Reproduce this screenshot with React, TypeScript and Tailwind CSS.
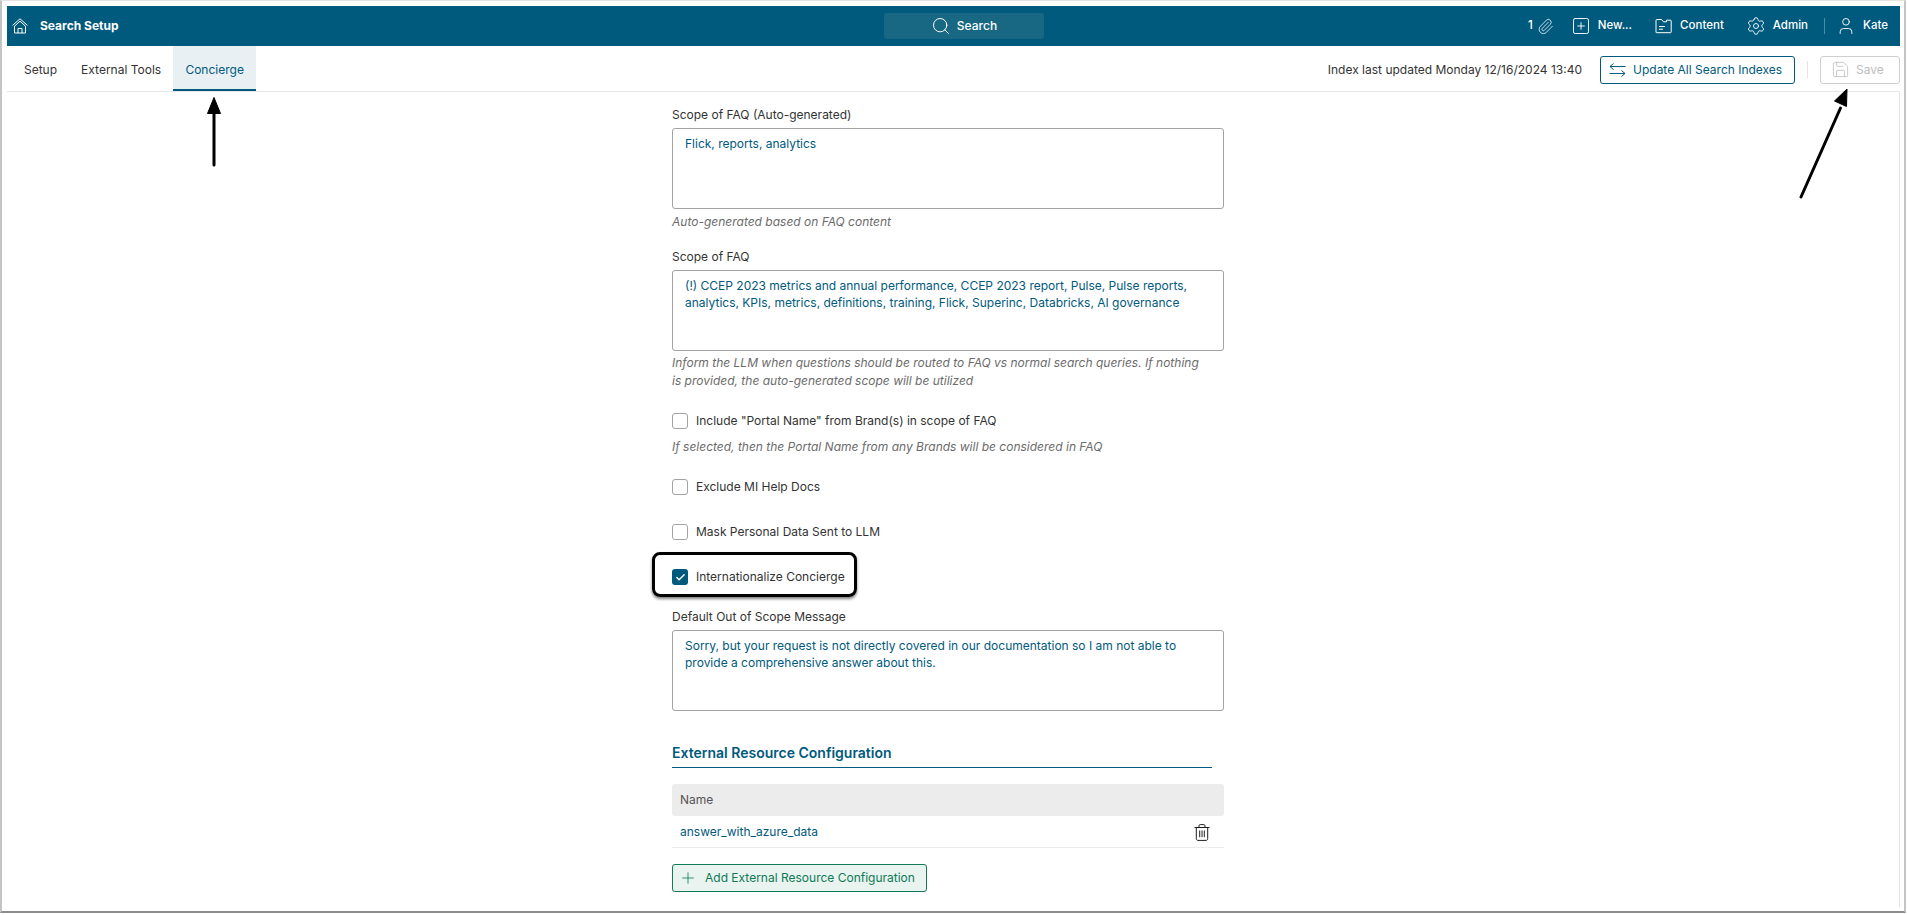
import React from "react";
import { Search, Paperclip, SquarePlus, Settings, User, Plus, Save, Check } from "lucide-react";

const HomeIcon = () => (
  <svg width="16" height="16" viewBox="0 0 16 16" fill="none" stroke="white" strokeWidth="1" strokeLinejoin="round">
    <path d="M0.6 7.4 8 0.8 15.4 7.4" />
    <path d="M2.5 8.2 8 3.2 13.5 8.2V15H2.5Z" />
    <path d="M6 15V10.5H10V15" />
  </svg>
);

const FolderIcon = () => (
  <svg width="17" height="16" viewBox="0 0 17 16" fill="none" stroke="white" strokeWidth="1" strokeLinejoin="round">
    <path d="M1 14.5V2.2C1 1.7 1.3 1.5 1.8 1.5H6.5L8.5 3.8H11.5V2.2H15.5C16 2.2 16.2 2.5 16.2 3V14C16.2 14.5 16 14.7 15.5 14.7H1.8C1.3 14.7 1 14.5 1 14.5Z" />
    <path d="M4 8.5H10M4 11.2H8" />
  </svg>
);

const SwapIcon = () => (
  <svg width="17" height="14" viewBox="0 0 17 14" fill="none" stroke="#005a7d" strokeWidth="1">
    <path d="M16.5 3.5H1M4.5 0.5 1 3.5 4.5 6.5" />
    <path d="M0.5 10.5H16M12.5 7.5 16 10.5 12.5 13.5" />
  </svg>
);

const TrashIcon = () => (
  <svg width="16" height="17" viewBox="0 0 16 17" fill="none" stroke="#1f1f1f" strokeWidth="1" strokeLinejoin="round">
    <path d="M0.5 3.5H15.5" />
    <path d="M5 3.5V1.8C5 1 5.5 0.6 6.2 0.6H9.8C10.5 0.6 11 1 11 1.8V3.5" />
    <path d="M2.3 3.5V14.6C2.3 15.7 3 16.4 4 16.4H12C13 16.4 13.7 15.7 13.7 14.6V3.5" />
    <path d="M5.7 6.5V13.2M8 6.5V13.2M10.3 6.5V13.2" />
  </svg>
);

function Field({ label, value, help }: { label: string; value: React.ReactNode; help?: React.ReactNode }) {
  return (
    <div>
      <div className="text-xs leading-[17px] text-[#333] mb-[5px]">{label}</div>
      <div className="h-[81px] border border-[#a3a3a3] rounded-[3px] px-[12px] pt-[6px] text-xs leading-[17px] text-[#005a7d]">
        {value}
      </div>
      {help && <div className="mt-1 text-xs leading-[18px] italic text-[#6b6b6b]">{help}</div>}
    </div>
  );
}

function CheckRow({ label, checked }: { label: string; checked?: boolean }) {
  return (
    <div className="flex items-center h-4">
      {checked ? (
        <span className="w-4 h-4 rounded-[3px] bg-[#005a7d] flex items-center justify-center">
          <Check size={11} color="white" strokeWidth={3} />
        </span>
      ) : (
        <span className="w-4 h-4 rounded-[3px] border border-[#a3a3a3] bg-white" />
      )}
      <span className="ml-2 text-xs text-[#333]">{label}</span>
    </div>
  );
}

function App() {
  return (
    <div className="h-[915px] bg-white overflow-hidden relative" style={{ fontFamily: "Inter, sans-serif" }}>
      <div className="h-[913px] mr-px border-l-2 border-r-2 border-t border-b-2 border-l-[#c4c4c4] border-r-[#c4c4c4] border-t-[#e4e4e4] border-b-[#8c8c8c] pl-[5px] pt-[5px] pr-1">
        <header className="h-10 bg-[#005a7d] text-white flex items-center text-xs font-medium">
          <div className="w-[877px] flex items-center pl-[5px]">
            <HomeIcon />
            <span className="ml-3 font-bold">Search Setup</span>
          </div>
          <div className="w-40 h-[26px] rounded-[3px] bg-[#186883] flex items-center justify-center gap-[6px]">
            <Search size={20} strokeWidth={1.2} />
            <span>Search</span>
          </div>
          <div className="flex-1 flex items-center justify-end pr-3 text-[11.5px]">
            <span>1</span>
            <Paperclip size={17} strokeWidth={1.1} className="ml-1" />
            <SquarePlus size={20} strokeWidth={1.1} className="ml-[17px]" />
            <span className="ml-[7px]">New...</span>
            <span className="ml-[23px]"><FolderIcon /></span>
            <span className="ml-2">Content</span>
            <Settings size={20} strokeWidth={1.1} className="ml-[22px]" />
            <span className="ml-[7px]">Admin</span>
            <span className="ml-4 w-px h-4 bg-[#4d8aa3]" />
            <User size={20} strokeWidth={1.1} className="ml-[11px]" />
            <span className="ml-[7px]">Kate</span>
          </div>
        </header>

        <div className="h-[46px] border-b border-[#e6e6e6] flex items-stretch text-xs text-[#333]">
          <div className="flex items-center pt-[2px] pl-[17px] pr-3">Setup</div>
          <div className="flex items-center pt-[2px] px-3">External Tools</div>
          <div className="flex items-center pt-1 px-3 bg-[#e9f0f4] border-b-2 border-[#005a7d] text-[#005a7d] w-[83px] justify-center">Concierge</div>
          <div className="flex-1 flex items-center pt-[2px] justify-end">
            <span className="text-[#333] mr-[18px]">Index last updated Monday 12/16/2024 13:40</span>
            <button className="w-[195px] h-7 border border-[#005a7d] rounded-[3px] text-[#005a7d] flex items-center pl-2 gap-[7px]">
              <SwapIcon />
              Update All Search Indexes
            </button>
            <span className="mx-3 w-px h-[17px] bg-[#e4e4e4]" />
            <button className="w-20 h-7 border border-[#cfcfcf] rounded-[3px] text-[#bdbdbd] flex items-center pl-[10px] gap-[6px]">
              <Save size={19} strokeWidth={1} />
              Save
            </button>
          </div>
        </div>

        <main className="h-[815px] border-r border-[#e6e6e6] pl-[665px] pt-[14px]">
          <div className="w-[552px]">
            <Field label="Scope of FAQ (Auto-generated)" value="Flick, reports, analytics" help="Auto-generated based on FAQ content" />
            <div className="mt-[17px]">
              <Field
                label="Scope of FAQ"
                value="(!) CCEP 2023 metrics and annual performance, CCEP 2023 report, Pulse, Pulse reports, analytics, KPIs, metrics, definitions, training, Flick, Superinc, Databricks, AI governance"
                help={<span className="block w-[530px] -mt-px">Inform the LLM when questions should be routed to FAQ vs normal search queries. If nothing is provided, the auto-generated scope will be utilized</span>}
              />
            </div>
            <div className="mt-[23px]">
              <CheckRow label={'Include "Portal Name" from Brand(s) in scope of FAQ'} />
              <div className="mt-[9px] text-xs leading-[18px] italic text-[#6b6b6b]">If selected, then the Portal Name from any Brands will be considered in FAQ</div>
            </div>
            <div className="mt-[23px]"><CheckRow label="Exclude MI Help Docs" /></div>
            <div className="mt-[29px]"><CheckRow label="Mask Personal Data Sent to LLM" /></div>
            <div className="mt-[29px] relative">
              <CheckRow label="Internationalize Concierge" checked />
              <div className="absolute -left-5 -top-[17px] w-[205px] h-[45px] border-[3px] border-black rounded-lg shadow-[0_2px_3px_rgba(0,0,0,0.5)]" />
            </div>
            <div className="mt-[23px]">
              <Field
                label="Default Out of Scope Message"
                value="Sorry, but your request is not directly covered in our documentation so I am not able to provide a comprehensive answer about this."
              />
            </div>

            <h2 className="mt-8 w-[540px] h-[25px] border-b border-[#005a7d] text-sm leading-5 font-semibold text-[#005a7d]">External Resource Configuration</h2>

            <div className="mt-4 h-8 rounded-[3px] bg-[#ececec] flex items-center px-2 text-xs text-[#555]">Name</div>
            <div className="h-8 border-b border-[#ececec] flex items-center justify-between pt-px pl-2 pr-[14px] text-xs text-[#005a7d]">
              <span>answer_with_azure_data</span>
              <TrashIcon />
            </div>
            <button className="mt-4 w-[255px] h-7 border border-[#0f7a55] rounded-[3px] bg-[#e9f3f0] text-[#0f7a55] text-xs flex items-center pl-[6px] gap-2">
              <Plus size={18} strokeWidth={1.1} />
              Add External Resource Configuration
            </button>
          </div>
        </main>
      </div>

      <svg className="absolute left-[205px] top-[95px] w-5 h-[75px]" viewBox="0 0 20 75">
        <path d="M9 70V18" stroke="black" strokeWidth="3" strokeLinecap="round" />
        <path d="M9 2.5 2.5 18.5H15.5Z" fill="black" stroke="black" strokeWidth="1" strokeLinejoin="round" />
      </svg>
      <svg className="absolute left-[1790px] top-[84px] w-[70px] h-[120px]" viewBox="0 0 70 120">
        <path d="M11 113 50.5 24" stroke="black" strokeWidth="3" strokeLinecap="round" />
        <path d="M57 5 44.5 17 56.5 22.5Z" fill="black" stroke="black" strokeWidth="1" strokeLinejoin="round" />
      </svg>
    </div>
  );
}

export default App;
